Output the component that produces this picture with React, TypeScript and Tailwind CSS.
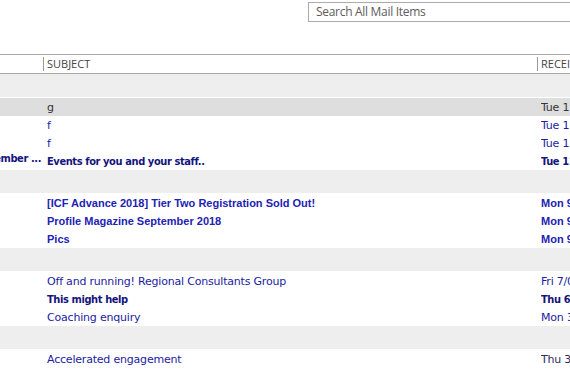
import React from 'react';

type Row = {
  from?: string;
  subject: string;
  date: string;
  kind: 'sel' | 'tahoma' | 'tahomaBold' | 'arialBold' | 'plain';
};

type Group = { rows: Row[] };

const GROUPS: Group[] = [
  {
    rows: [
      { subject: 'g', date: 'Tue 11/13/2018', kind: 'sel' },
      { subject: 'f', date: 'Tue 11/13/2018', kind: 'tahoma' },
      { subject: 'f', date: 'Tue 11/13/2018', kind: 'tahoma' },
      { from: 'ICF Newsletter September ...', subject: 'Events for you and your staff..', date: 'Tue 11/13/2018', kind: 'tahomaBold' },
    ],
  },
  {
    rows: [
      { subject: '[ICF Advance 2018] Tier Two Registration Sold Out!', date: 'Mon 9/10/2018', kind: 'arialBold' },
      { subject: 'Profile Magazine September 2018', date: 'Mon 9/10/2018', kind: 'arialBold' },
      { subject: 'Pics', date: 'Mon 9/10/2018', kind: 'arialBold' },
    ],
  },
  {
    rows: [
      { subject: 'Off and running! Regional Consultants Group', date: 'Fri 7/06/2018', kind: 'tahoma' },
      { subject: 'This might help', date: 'Thu 6/28/2018', kind: 'tahomaBold' },
      { subject: 'Coaching enquiry', date: 'Mon 3/12/2018', kind: 'tahoma' },
    ],
  },
  {
    rows: [
      { subject: 'Accelerated engagement', date: 'Thu 3/01/2018', kind: 'plain' },
    ],
  },
];

// tahoma isn't installed: dejavu with tighter tracking gets close enough
const tahoma = "font-['DejaVu_Sans',sans-serif] text-[11px] tracking-[-0.2px]";
const tahomaBold = "font-['DejaVu_Sans_Condensed','DejaVu_Sans',sans-serif] text-[11px] font-bold tracking-[-0.4px]";
const arialBold = "font-['Liberation_Sans',sans-serif] text-[11px] font-bold";

const rowStyles: Record<Row['kind'], { bg: string; pad: string; subject: string; date: string }> = {
  sel: {
    bg: 'bg-[#dedede]',
    pad: 'pb-[4px]',
    subject: `${tahoma} text-[#333333]`,
    date: `${tahoma} text-[#333333]`,
  },
  tahoma: {
    bg: 'bg-white',
    pad: 'pb-[4px]',
    subject: `${tahoma} text-[#1c1ca0]`,
    date: `${tahoma} text-[#1c1ca0]`,
  },
  tahomaBold: {
    bg: 'bg-white',
    pad: 'pb-[4px]',
    subject: `${tahomaBold} text-[#14147c]`,
    date: `${tahomaBold} text-[#14147c]`,
  },
  arialBold: {
    bg: 'bg-white',
    pad: 'pb-[4px]',
    subject: `${arialBold} text-[#2222b4]`,
    date: `${arialBold} text-[#2222b4]`,
  },
  plain: {
    bg: 'bg-white',
    pad: 'pb-[4px]',
    subject: `${tahoma} text-[#1c1ca0]`,
    date: `${tahoma} text-[#2a2a5a]`,
  },
};

function MailRow({ row }: { row: Row }) {
  const s = rowStyles[row.kind];
  return (
    <div className={`flex h-[18px] items-center whitespace-nowrap ${s.bg} ${s.pad}`}>
      <div className="flex w-[44px] shrink-0 justify-end overflow-hidden pr-[3px]">
        {row.from && <span className={s.subject}>{row.from}</span>}
      </div>
      <div className="w-[497px] shrink-0 overflow-hidden pl-[3px]">
        <span className={s.subject}>{row.subject}</span>
      </div>
      <div className="min-w-0 flex-1 overflow-hidden">
        <span className={s.date}>{row.date}</span>
      </div>
    </div>
  );
}

export default function App() {
  return (
    <div className="h-[377px] w-[570px] overflow-hidden bg-white">
      {/* search bar */}
      <div className="flex h-[54px] items-start justify-end pt-[2px]">
        <div className="-mr-[20px] flex h-[20px] w-[282px] items-center border border-[#ababab] bg-white pb-[1px] pl-[7px]">
          <span className="font-['Open_Sans',sans-serif] text-[12px] tracking-[-0.3px] text-[#5c5c5c]">Search All Mail Items</span>
        </div>
      </div>

      {/* column headers */}
      <div className="flex h-[20px] items-center border-y border-[#a8a8a8] font-['Open_Sans',sans-serif] text-[11px] text-[#444444]">
        <div className="w-[43px] shrink-0" />
        <div className="flex h-[14px] w-[494px] shrink-0 items-center border-l border-[#9a9a9a] pl-[3px]">SUBJECT</div>
        <div className="flex h-[14px] min-w-0 flex-1 items-center overflow-hidden whitespace-nowrap border-l border-[#9a9a9a] pl-[3px]">RECEIVED</div>
      </div>

      {GROUPS.map((g, gi) => (
        <div key={gi}>
          <div className="h-[24px] border-b border-white bg-[#eeeeee]" />
          {g.rows.map((r, ri) => (
            <MailRow key={ri} row={r} />
          ))}
        </div>
      ))}
    </div>
  );
}
